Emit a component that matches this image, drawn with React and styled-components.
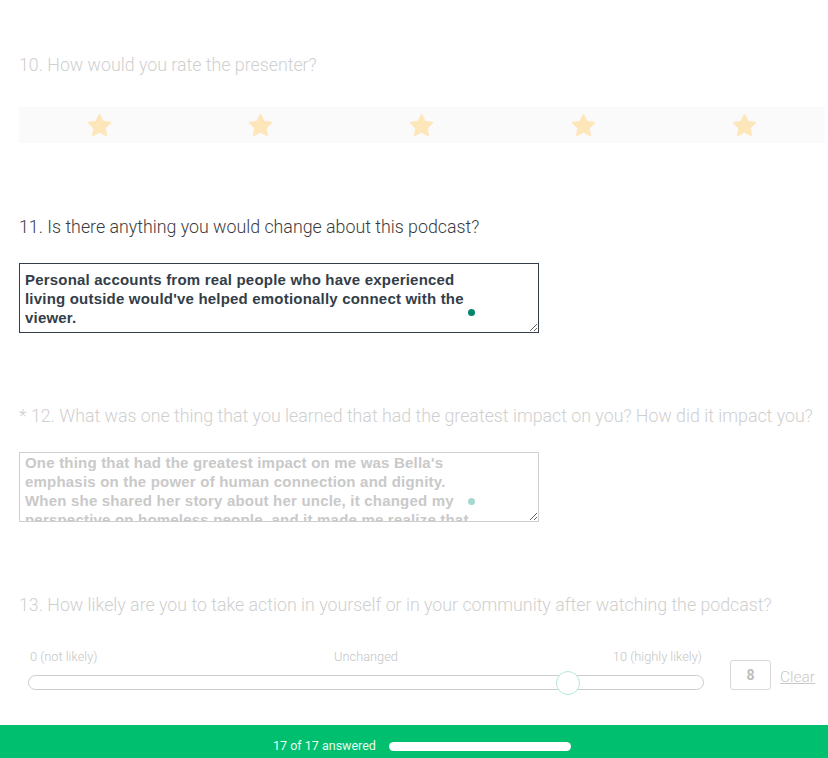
import styled, { createGlobalStyle } from 'styled-components';

const GlobalStyle = createGlobalStyle`
  html, body {
    margin: 0;
    padding: 0;
    background: #ffffff;
    overflow: hidden;
  }
  body {
    font-family: Roboto, "Liberation Sans", sans-serif;
  }
`

const Page = styled.div`
  height: 100vh;
  display: flex;
  flex-direction: column;
`

const Main = styled.main`
  flex: 1;
  min-height: 0;
  padding: 53px 0 0 19px;
`

const Question = styled.section`
  margin-bottom: ${p => p.$gap ?? 71}px;
`

const Title = styled.h2`
  margin: 0 0 ${p => p.$below || 24}px;
  font-size: 17.8px;
  line-height: 24px;
  font-weight: 300;
  white-space: nowrap;
  color: ${p => (p.$active ? '#3b3b3b' : '#cfcfcf')};
`

const StarBar = styled.div`
  width: 806px;
  height: 36px;
  background: #fafafa;
  display: grid;
  grid-template-columns: repeat(5, 1fr);
  align-items: center;
  justify-items: center;
`

const Star = styled.svg`
  width: 27px;
  height: 27px;
  fill: #fde6b9;
  stroke: #fde6b9;
  stroke-width: 1.5;
  stroke-linejoin: round;
`

const AreaWrap = styled.div`
  position: relative;
  width: 520px;
  height: 70px;
`

const Area = styled.textarea`
  box-sizing: border-box;
  width: 520px;
  height: 70px;
  margin: 0;
  padding: ${p => p.$top ?? 6}px 50px 0 5px;
  border: 1px solid ${p => (p.$active ? '#333e48' : '#cfcfcf')};
  border-radius: 0;
  font-family: "Liberation Sans", Arial, sans-serif;
  font-weight: 700;
  font-size: 15px;
  letter-spacing: 0.2px;
  line-height: 19px;
  color: ${p => (p.$active ? '#333e48' : '#c9c9c9')};
  background: #ffffff;
  overflow: hidden;
  resize: vertical;
  outline: none;
`

const Dot = styled.span`
  position: absolute;
  left: 449px;
  top: 46px;
  width: 7px;
  height: 7px;
  border-radius: 50%;
  background: ${p => (p.$active ? '#00856f' : '#a6d9cf')};
`

const SliderRow = styled.div`
  display: flex;
  align-items: flex-end;
  padding-left: 9px;
`

const SliderCol = styled.div`
  width: 676px;
`

const Labels = styled.div`
  display: grid;
  grid-template-columns: 1fr auto 1fr;
  padding: 0 2px;
  margin-bottom: 10px;
  font-size: 12.8px;
  line-height: 16px;
  font-weight: 300;
  color: #c6c6c6;
`

const Label = styled.span`
  text-align: ${p => p.$align || 'left'};
`

const Track = styled.div`
  position: relative;
  box-sizing: border-box;
  height: 15px;
  border: 1px solid #cccccc;
  border-radius: 8px;
  background: #ffffff;
`

const Thumb = styled.span`
  position: absolute;
  top: 50%;
  width: 24px;
  height: 24px;
  box-sizing: border-box;
  border: 1.5px solid #b3ebd3;
  border-radius: 50%;
  background: #ffffff;
  transform: translate(-50%, -50%);
`

const ValueBox = styled.div`
  box-sizing: border-box;
  width: 41px;
  height: 30px;
  margin-left: 26px;
  border: 1px solid #d9d9d9;
  border-radius: 3px;
  display: flex;
  align-items: center;
  justify-content: center;
  font-size: 14px;
  font-weight: 700;
  color: #bdbdbd;
`

const Clear = styled.a`
  margin-left: 9px;
  margin-bottom: 4px;
  font-size: 15.5px;
  font-weight: 300;
  color: #c9c9c9;
  text-decoration: underline;
`

const Footer = styled.footer`
  flex-shrink: 0;
  box-sizing: border-box;
  height: 33px;
  padding: 9px 0 0 16px;
  background: #00bf6f;
  display: flex;
  align-items: center;
  justify-content: center;
  gap: 13px;
`

const Answered = styled.span`
  font-size: 12.5px;
  line-height: 16px;
  color: #e8fbf1;
`

const Progress = styled.div`
  width: 182px;
  height: 9px;
  border-radius: 5px;
  background: #ffffff;
`

const StarIcon = () => (
  <Star viewBox="0 0 24 24">
    <path d="M12 2.5l2.95 6 6.6.96-4.78 4.65 1.13 6.57L12 17.58l-5.9 3.1 1.13-6.57L2.45 9.46l6.6-.96L12 2.5z" />
  </Star>
)

const App = () => {
  const value = 8

  return (
    <Page>
      <GlobalStyle />
      <Main>
        <Question $gap={72}>
          <Title $below={30}>10. How would you rate the presenter?</Title>
          <StarBar>
            {[1, 2, 3, 4, 5].map(n => <StarIcon key={n} />)}
          </StarBar>
        </Question>

        <Question>
          <Title $active>11. Is there anything you would change about this podcast?</Title>
          <AreaWrap>
            <Area
              $active
              readOnly
              value="Personal accounts from real people who have experienced living outside would've helped emotionally connect with the viewer."
            />
            <Dot $active />
          </AreaWrap>
        </Question>

        <Question>
          <Title>* 12. What was one thing that you learned that had the greatest impact on you? How did it impact you?</Title>
          <AreaWrap>
            <Area
              $top={0}
              readOnly
              value="One thing that had the greatest impact on me was Bella's emphasis on the power of human connection and dignity. When she shared her story about her uncle, it changed my perspective on homeless people, and it made me realize that"
            />
            <Dot />
          </AreaWrap>
        </Question>

        <Question $gap={0}>
          <Title $below={32}>13. How likely are you to take action in yourself or in your community after watching the podcast?</Title>
          <SliderRow>
            <SliderCol>
              <Labels>
                <Label>0 (not likely)</Label>
                <Label $align="center">Unchanged</Label>
                <Label $align="right">10 (highly likely)</Label>
              </Labels>
              <Track>
                <Thumb style={{ left: `${value * 10}%` }} />
              </Track>
            </SliderCol>
            <ValueBox>{value}</ValueBox>
            <Clear>Clear</Clear>
          </SliderRow>
        </Question>
      </Main>
      <Footer>
        <Answered>17 of 17 answered</Answered>
        <Progress />
      </Footer>
    </Page>
  )
}

export default App
